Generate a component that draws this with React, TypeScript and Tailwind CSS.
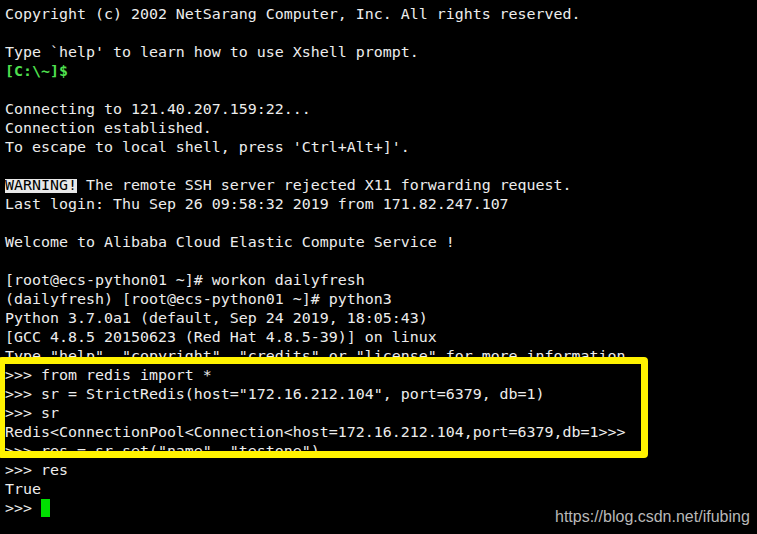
const lines: string[] = [
  'Copyright (c) 2002 NetSarang Computer, Inc. All rights reserved.',
  '',
  "Type `help' to learn how to use Xshell prompt.",
  '__PROMPT__',
  '',
  'Connecting to 121.40.207.159:22...',
  'Connection established.',
  "To escape to local shell, press 'Ctrl+Alt+]'.",
  '',
  '__WARNING__',
  'Last login: Thu Sep 26 09:58:32 2019 from 171.82.247.107',
  '',
  'Welcome to Alibaba Cloud Elastic Compute Service !',
  '',
  '[root@ecs-python01 ~]# workon dailyfresh',
  '(dailyfresh) [root@ecs-python01 ~]# python3',
  'Python 3.7.0a1 (default, Sep 24 2019, 18:05:43)',
  '[GCC 4.8.5 20150623 (Red Hat 4.8.5-39)] on linux',
  'Type "help", "copyright", "credits" or "license" for more information.',
  '>>> from redis import *',
  '>>> sr = StrictRedis(host="172.16.212.104", port=6379, db=1)',
  '>>> sr',
  'Redis<ConnectionPool<Connection<host=172.16.212.104,port=6379,db=1>>>',
  '>>> res = sr.set("name", "testone")',
  '>>> res',
  'True',
  '__CURSOR__',
];

function Line({ text }: { text: string }) {
  if (text === '__PROMPT__') {
    return <div className="h-[19px] whitespace-pre font-bold text-[#4fe04f]">[C:\~]$</div>;
  }
  if (text === '__WARNING__') {
    return (
      <div className="h-[19px] whitespace-pre">
        <span className="text-black bg-[linear-gradient(to_bottom,transparent_3px,#e8e8e8_3px,#e8e8e8_17px,transparent_17px)]">
          WARNING!
        </span>
        {' The remote SSH server rejected X11 forwarding request.'}
      </div>
    );
  }
  if (text === '__CURSOR__') {
    return (
      <div className="h-[19px] whitespace-pre flex items-start">
        <span>{'>>> '}</span>
        <span className="inline-block w-[9px] h-[18px] bg-[#00e000]" />
      </div>
    );
  }
  return <div className="h-[19px] whitespace-pre">{text}</div>;
}

export default function App() {
  return (
    <div className="relative w-[757px] h-[534px] bg-black overflow-hidden">
      {/* terminal output */}
      <div className="pt-[5px] pl-[5px] text-[14.95px] leading-[19px] text-[#ededed] font-['DejaVu_Sans_Mono',monospace]">
        {lines.map((t, i) => (
          <Line key={i} text={t} />
        ))}
      </div>

      {/* yellow highlight box */}
      <div className="absolute left-[-2px] top-[357px] w-[650px] h-[101px] border-[7px] border-[#fff200] rounded-[4px]" />

      {/* watermark */}
      <div className="absolute left-[555px] top-[505px] text-[16px] text-[#b8b8b8] font-['Liberation_Sans',Arial,sans-serif] whitespace-nowrap">
        https://blog.csdn.net/ifubing
      </div>
    </div>
  );
}
